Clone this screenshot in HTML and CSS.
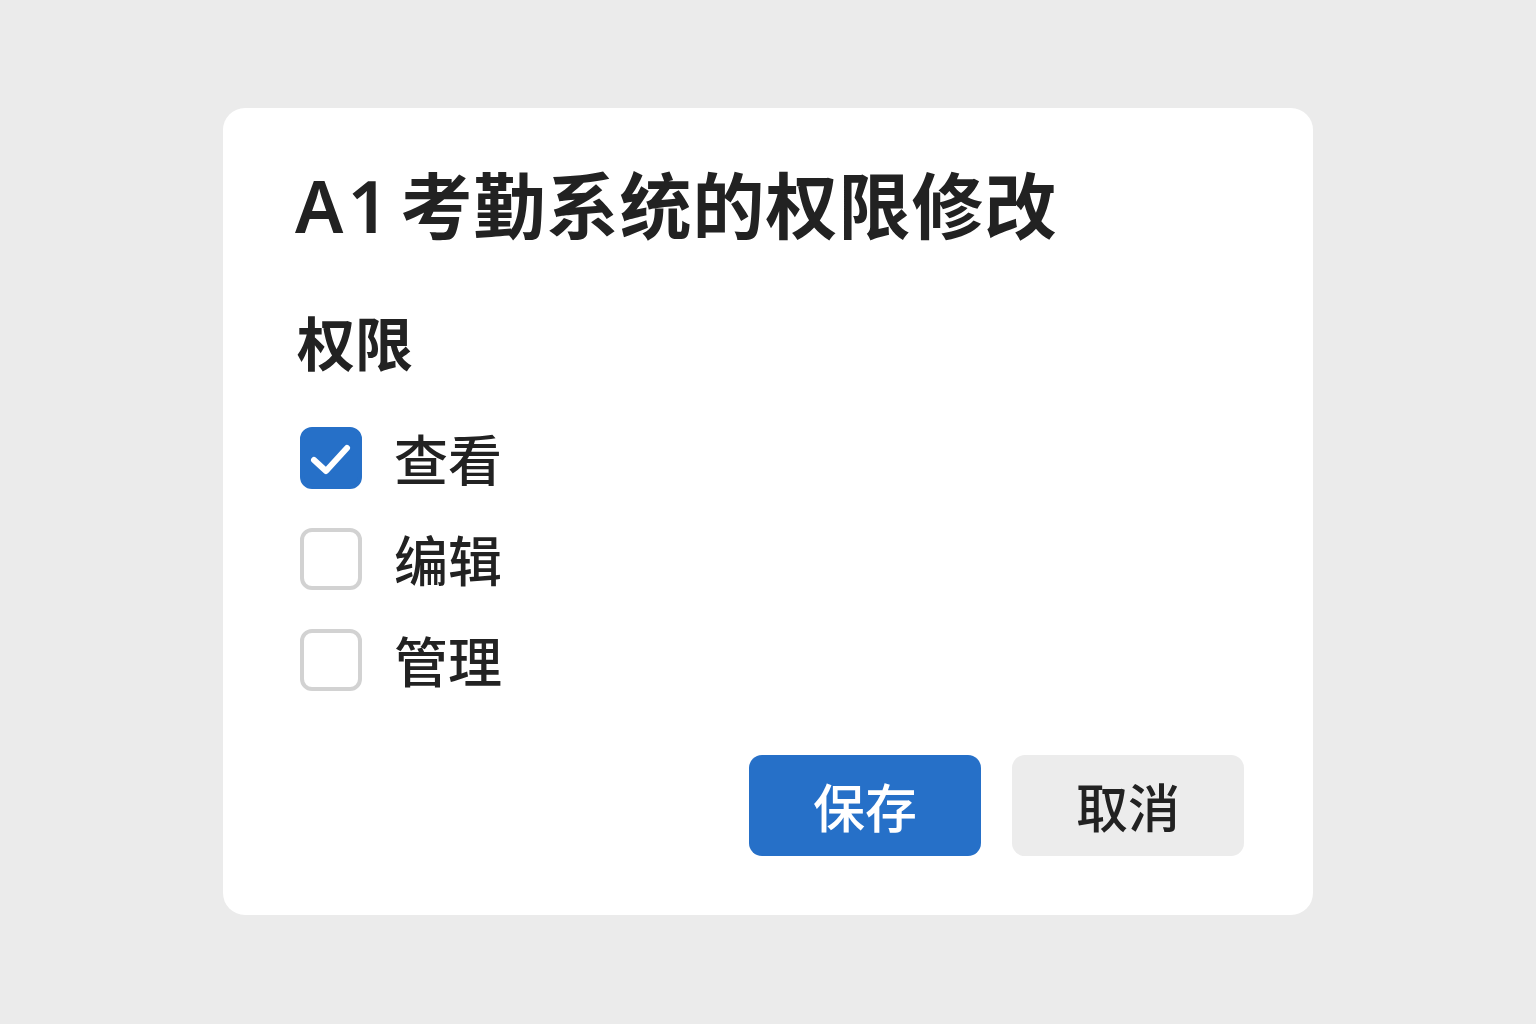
FILE: index.html
```html
<!DOCTYPE html>
<html lang="zh-CN">
<head>
    <meta charset="UTF-8">
    <meta name="viewport" content="width=device-width, initial-scale=1.0">
    <title>A1考勤系统的权限修改</title>
    <link rel="stylesheet" href="styles.css">
</head>
<body>
    <div class="dialog">
        <h1 class="dialog-title"><span class="latin">A1</span>考勤系统的权限修改</h1>

        <div class="section-label">权限</div>

        <div class="options">
            <label class="option">
                <span class="checkbox checked">
                    <svg viewBox="0 0 62 62" width="62" height="62">
                        <path d="M14 33 L26 44 L47 21" fill="none" stroke="#fff" stroke-width="6" stroke-linecap="round" stroke-linejoin="round"/>
                    </svg>
                </span>
                <span class="option-text">查看</span>
            </label>
            <label class="option">
                <span class="checkbox"></span>
                <span class="option-text">编辑</span>
            </label>
            <label class="option">
                <span class="checkbox"></span>
                <span class="option-text">管理</span>
            </label>
        </div>

        <div class="actions">
            <button class="btn btn-primary">保存</button>
            <button class="btn btn-secondary">取消</button>
        </div>
    </div>
</body>
</html>
```

FILE: styles.css
```css
body {
    font-family: "Noto Sans CJK SC", "Noto Sans", sans-serif;
    margin: 0;
    padding: 0;
    background-color: #ebebeb;
    color: #222;
    height: 100vh;
    box-sizing: border-box;
    padding-top: 108px;
    padding-left: 223px;
}
.dialog {
    width: 1090px;
    height: 807px;
    box-sizing: border-box;
    padding: 58px 69px 0 72px;
    background-color: #fff;
    border-radius: 22px;
}
.dialog-title {
    margin: 0;
    height: 72px;
    font-size: 72px;
    font-weight: 600;
    line-height: 72px;
    letter-spacing: 1px;
}
.dialog-title .latin {
    font-family: "Noto Sans", sans-serif;
    letter-spacing: 4px;
    margin-right: 8px;
}
.section-label {
    margin-top: 75px;
    height: 56px;
    font-size: 58px;
    font-weight: 600;
    line-height: 56px;
    padding-left: 2px;
}
.options {
    margin-top: 58px;
    display: flex;
    flex-direction: column;
    gap: 39px;
}
.option {
    display: flex;
    align-items: center;
    gap: 32px;
    height: 62px;
    padding-left: 5px;
}
.checkbox {
    width: 62px;
    height: 62px;
    box-sizing: border-box;
    border: 4px solid #d2d2d2;
    border-radius: 12px;
    display: flex;
    align-items: center;
    justify-content: center;
}
.checkbox.checked {
    background-color: #2670c8;
    border-color: #2670c8;
}
.checkbox.checked svg {
    flex-shrink: 0;
}
.option-text {
    font-size: 54px;
    font-weight: 500;
    line-height: 62px;
}
.actions {
    margin-top: 64px;
    display: flex;
    justify-content: flex-end;
    gap: 31px;
}
.btn {
    width: 232px;
    height: 101px;
    border: none;
    border-radius: 13px;
    font-family: "Noto Sans CJK SC", "Noto Sans", sans-serif;
    font-size: 52px;
    font-weight: 500;
    cursor: pointer;
}
.btn-primary {
    background-color: #2670c8;
    color: #fff;
}
.btn-secondary {
    background-color: #ececec;
    color: #222;
}
```
